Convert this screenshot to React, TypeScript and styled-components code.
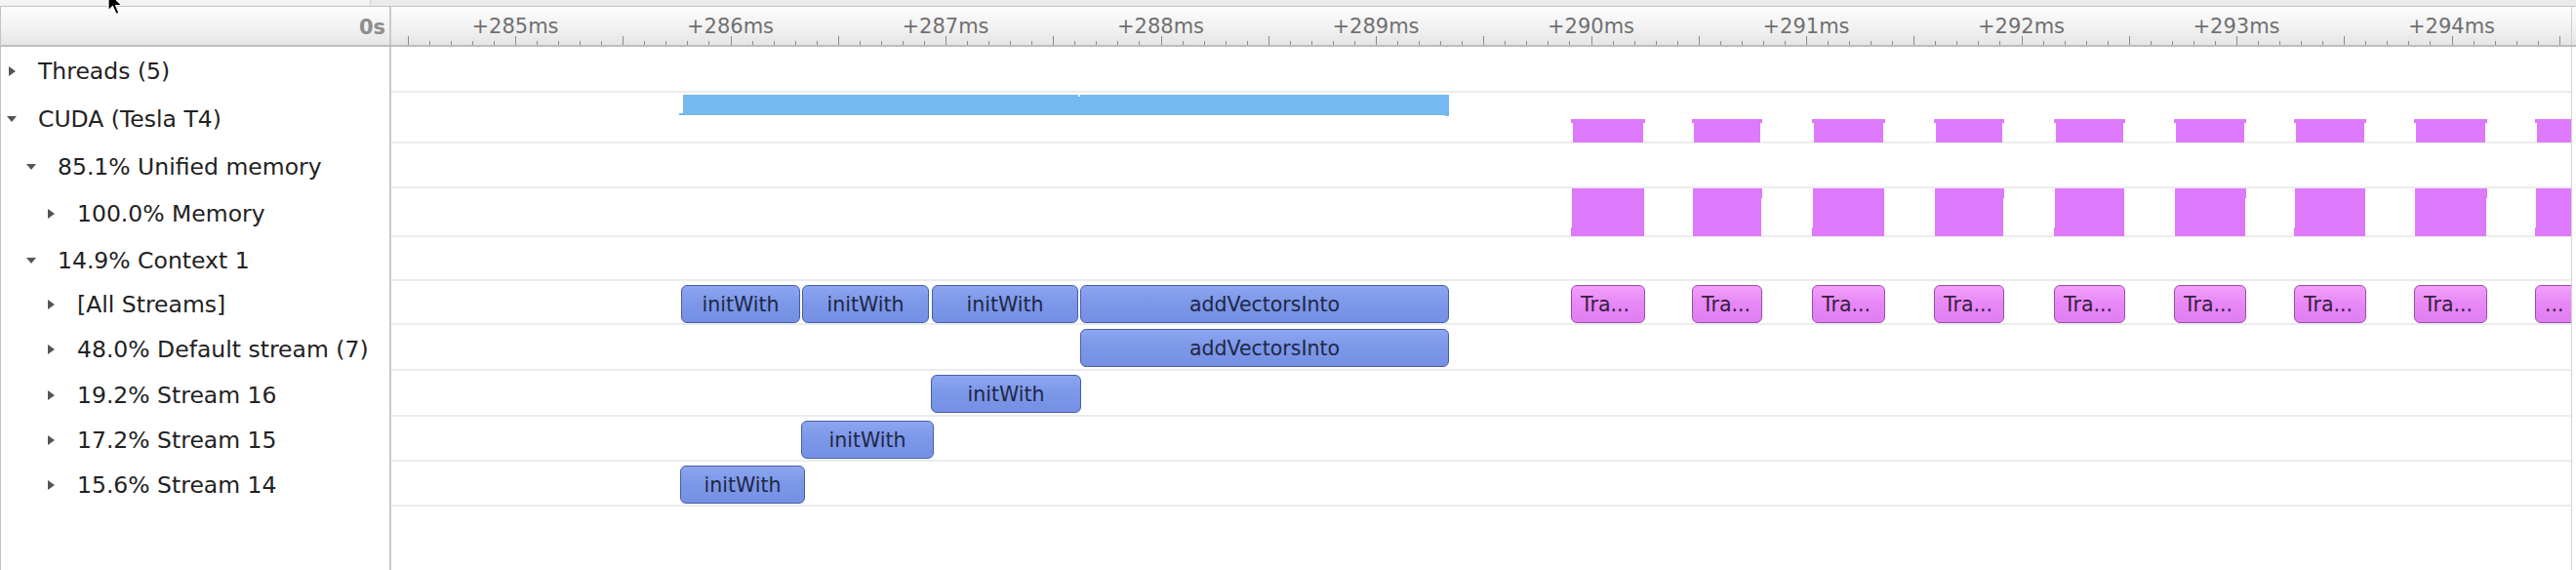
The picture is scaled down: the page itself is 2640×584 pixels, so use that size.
import React from 'react';
import styled, { createGlobalStyle, css } from 'styled-components';

const GlobalStyle = createGlobalStyle`
  html, body { margin: 0; padding: 0; background: #ffffff; }
  body { font-family: "DejaVu Sans", "Liberation Sans", sans-serif; }
`;

/* timeline geometry: page x of the timeline's left edge and of +285ms */
const ORIGIN = 401;
const X285 = 528;
const PX_PER_MS = 220.5;
const msToX = (ms: number) => X285 - ORIGIN + (ms - 285) * PX_PER_MS;
const px = (pageX: number) => pageX - ORIGIN;

type Row = { label: string; level: number; open: boolean; h: number };
const ROWS: Row[] = [
  { label: 'Threads (5)', level: 0, open: false, h: 47 },
  { label: 'CUDA (Tesla T4)', level: 0, open: true, h: 52 },
  { label: '85.1% Unified memory', level: 1, open: true, h: 46 },
  { label: '100.0% Memory', level: 2, open: false, h: 50 },
  { label: '14.9% Context 1', level: 1, open: true, h: 45 },
  { label: '[All Streams]', level: 2, open: false, h: 45 },
  { label: '48.0% Default stream (7)', level: 2, open: false, h: 47 },
  { label: '19.2% Stream 16', level: 2, open: false, h: 47 },
  { label: '17.2% Stream 15', level: 2, open: false, h: 46 },
  { label: '15.6% Stream 14', level: 2, open: false, h: 46 },
];

type Box = { row: number; x0: number; x1: number; label: string; kind: 'kernel' | 'memcpy' };
const TRANSFERS: [number, number][] = [
  [1610, 1686], [1734, 1806], [1857, 1932], [1982, 2054], [2105, 2178],
  [2228, 2302], [2351, 2425], [2474, 2549], [2598, 2672],
];
const BOXES: Box[] = [
  { row: 5, x0: 698, x1: 820, label: 'initWith', kind: 'kernel' },
  { row: 5, x0: 822, x1: 952, label: 'initWith', kind: 'kernel' },
  { row: 5, x0: 955, x1: 1105, label: 'initWith', kind: 'kernel' },
  { row: 5, x0: 1107, x1: 1485, label: 'addVectorsInto', kind: 'kernel' },
  ...TRANSFERS.map(([a, b], i) => ({
    row: 5, x0: a, x1: b, label: i === TRANSFERS.length - 1 ? '...' : 'Tra...', kind: 'memcpy' as const,
  })),
  { row: 6, x0: 1107, x1: 1485, label: 'addVectorsInto', kind: 'kernel' },
  { row: 7, x0: 954, x1: 1108, label: 'initWith', kind: 'kernel' },
  { row: 8, x0: 821, x1: 957, label: 'initWith', kind: 'kernel' },
  { row: 9, x0: 697, x1: 825, label: 'initWith', kind: 'kernel' },
];

const TICKS = Array.from({ length: 106 }, (_, i) => ({ t: 284.5 + i * 0.1, major: i % 5 === 0 }));
const LABELS = Array.from({ length: 10 }, (_, i) => 285 + i);

const Page = styled.div`
  position: relative;
  width: 2640px;
  height: 584px;
  display: flex;
  flex-direction: column;
  overflow: hidden;
  background: #ffffff;
`;

const TopStrip = styled.div`
  flex: none;
  height: 7px;
  box-sizing: border-box;
  display: flex;
  background: #ebebeb;
  border-bottom: 1px solid #c3c3c3;
`;

const TopTab = styled.div`
  width: 380px;
  box-sizing: border-box;
  background: #f3f3f3;
  border-right: 1px solid #d2d2d2;
`;

const Header = styled.div`
  flex: none;
  height: 41px;
  box-sizing: border-box;
  display: flex;
  background: linear-gradient(to bottom, #fcfcfc 0%, #f2f2f2 55%, #e5e5e5 100%);
  border-bottom: 2px solid #bdbdbd;
`;

const Corner = styled.div`
  flex: none;
  width: 401px;
  box-sizing: border-box;
  border-left: 1px solid #c2c2c2;
  border-right: 2px solid #c9c9c9;
  display: flex;
  align-items: center;
  justify-content: flex-end;
  padding: 2px 4px 0 0;
  font-size: 21px;
  font-weight: bold;
  color: #8d8d8d;
`;

const Ruler = styled.div`
  flex: 1;
  position: relative;
  overflow: hidden;
  margin-right: 4px;
  border-right: 1px solid #cfcfcf;
`;

const Tick = styled.div<{ $major: boolean }>`
  position: absolute;
  bottom: 0;
  width: 1px;
  height: ${(p) => (p.$major ? 9 : 4)}px;
  background: #8a8a8a;
`;

const TickLabel = styled.div`
  position: absolute;
  top: 7px;
  transform: translateX(-50%);
  font-size: 21px;
  line-height: 26px;
  color: #707070;
  white-space: nowrap;
`;

const Body = styled.div`
  flex: 1;
  min-height: 0;
  display: flex;
`;

const TreePanel = styled.div`
  flex: none;
  width: 401px;
  box-sizing: border-box;
  border-left: 1px solid #c2c2c2;
  border-right: 2px solid #c9c9c9;
  background: #ffffff;
`;

const TreeRow = styled.div<{ $h: number; $level: number }>`
  height: ${(p) => p.$h}px;
  box-sizing: border-box;
  display: flex;
  align-items: center;
  padding: 2px 0 0 ${(p) => 5 + p.$level * 20}px;
  font-size: 23.5px;
  color: #222222;
  white-space: nowrap;
`;

const Toggle = styled.span<{ $open: boolean }>`
  flex: none;
  width: 12px;
  height: 12px;
  margin-right: 21px;
  display: flex;
  align-items: center;
  justify-content: center;
  &::before {
    content: '';
    display: block;
    width: 0;
    height: 0;
    ${(p) =>
      p.$open
        ? css`
            border-top: 6px solid #555555;
            border-left: 5px solid transparent;
            border-right: 5px solid transparent;
          `
        : css`
            border-left: 7px solid #555555;
            border-top: 5px solid transparent;
            border-bottom: 5px solid transparent;
          `}
  }
`;

const Timeline = styled.div`
  flex: 1;
  position: relative;
  overflow: hidden;
  margin-right: 4px;
  border-right: 1px solid #d4d4d4;
`;

const Track = styled.div<{ $h: number }>`
  position: relative;
  height: ${(p) => p.$h}px;
  box-sizing: border-box;
  border-bottom: 2px solid #ececec;
`;

const Graph = styled.svg`
  position: absolute;
  left: 0;
  top: 0;
  overflow: visible;
`;

const EventBox = styled.div<{ $kind: 'kernel' | 'memcpy' }>`
  position: absolute;
  top: 4px;
  height: 39px;
  box-sizing: border-box;
  display: flex;
  align-items: center;
  overflow: hidden;
  white-space: nowrap;
  border-radius: 6px;
  font-size: 20.5px;
  ${(p) =>
    p.$kind === 'kernel'
      ? css`
          justify-content: center;
          background: linear-gradient(to bottom, #8ca6f0 0%, #7d98e9 45%, #7590e3 100%);
          border: 1.5px solid #465da8;
          color: #1f2745;
        `
      : css`
          justify-content: flex-start;
          padding-left: 9px;
          background: linear-gradient(to bottom, #f19ffb 0%, #e887f7 50%, #df7ef1 100%);
          border: 1.5px solid #9a4cab;
          color: #35203d;
        `}
`;

const Cursor = styled.svg`
  position: absolute;
  left: 110px;
  top: -9px;
`;

const MAGENTA = '#df79fb';
const BLUE = '#74b9f0';

function CudaGraph() {
  return (
    <Graph width={2240} height={50}>
      <g transform={`translate(${-ORIGIN},0)`}>
        <rect x={700} y={2} width={785} height={21} fill={BLUE} />
        <rect x={696} y={21} width={6} height={2} fill={BLUE} />
        <rect x={1481} y={18} width={4} height={6} fill={BLUE} />
        <rect x={1105} y={2} width={2} height={2} fill="#ffffff" />
        {TRANSFERS.map(([a, b]) => (
          <g key={a}>
            <rect x={a} y={27} width={b - a} height={4} fill={MAGENTA} />
            <rect x={a + 2} y={27} width={b - a - 4} height={24} fill={MAGENTA} />
          </g>
        ))}
      </g>
    </Graph>
  );
}

function MemoryGraph() {
  return (
    <Graph width={2240} height={48}>
      <g transform={`translate(${-ORIGIN},0)`}>
        {TRANSFERS.map(([a, b], i) => (
          <g key={a}>
            <rect x={a + 1} y={0} width={b - a - 2} height={49} fill={MAGENTA} />
            {i % 2 === 0 ? (
              <rect x={a} y={40} width={3} height={9} fill={MAGENTA} />
            ) : (
              <rect x={b - 3} y={0} width={3} height={10} fill={MAGENTA} />
            )}
          </g>
        ))}
      </g>
    </Graph>
  );
}

export default function App() {
  return (
    <>
      <GlobalStyle />
      <Page>
        <TopStrip>
          <TopTab />
        </TopStrip>
        <Header>
          <Corner>0s</Corner>
          <Ruler>
            {TICKS.map(({ t, major }) => (
              <Tick key={t.toFixed(1)} $major={major} style={{ left: Math.round(msToX(t)) }} />
            ))}
            {LABELS.map((ms) => (
              <TickLabel key={ms} style={{ left: msToX(ms) }}>
                +{ms}ms
              </TickLabel>
            ))}
          </Ruler>
        </Header>
        <Body>
          <TreePanel>
            {ROWS.map((r) => (
              <TreeRow key={r.label} $h={r.h} $level={r.level}>
                <Toggle $open={r.open} />
                {r.label}
              </TreeRow>
            ))}
          </TreePanel>
          <Timeline>
            {ROWS.map((r, i) => (
              <Track key={r.label} $h={r.h}>
                {i === 1 && <CudaGraph />}
                {i === 3 && <MemoryGraph />}
                {BOXES.filter((b) => b.row === i).map((b) => (
                  <EventBox
                    key={`${b.x0}-${b.label}`}
                    $kind={b.kind}
                    style={{ left: px(b.x0), width: b.x1 - b.x0 }}
                  >
                    {b.label}
                  </EventBox>
                ))}
              </Track>
            ))}
          </Timeline>
        </Body>
        <Cursor width="20" height="30" viewBox="0 0 20 30">
          <path
            d="M1 1 L1 20 L5.5 15.5 L9 23.5 L12 22.2 L8.6 14.5 L15 14.5 Z"
            fill="#000000"
            stroke="#ffffff"
            strokeWidth="1.2"
            strokeLinejoin="round"
          />
        </Cursor>
      </Page>
    </>
  );
}
